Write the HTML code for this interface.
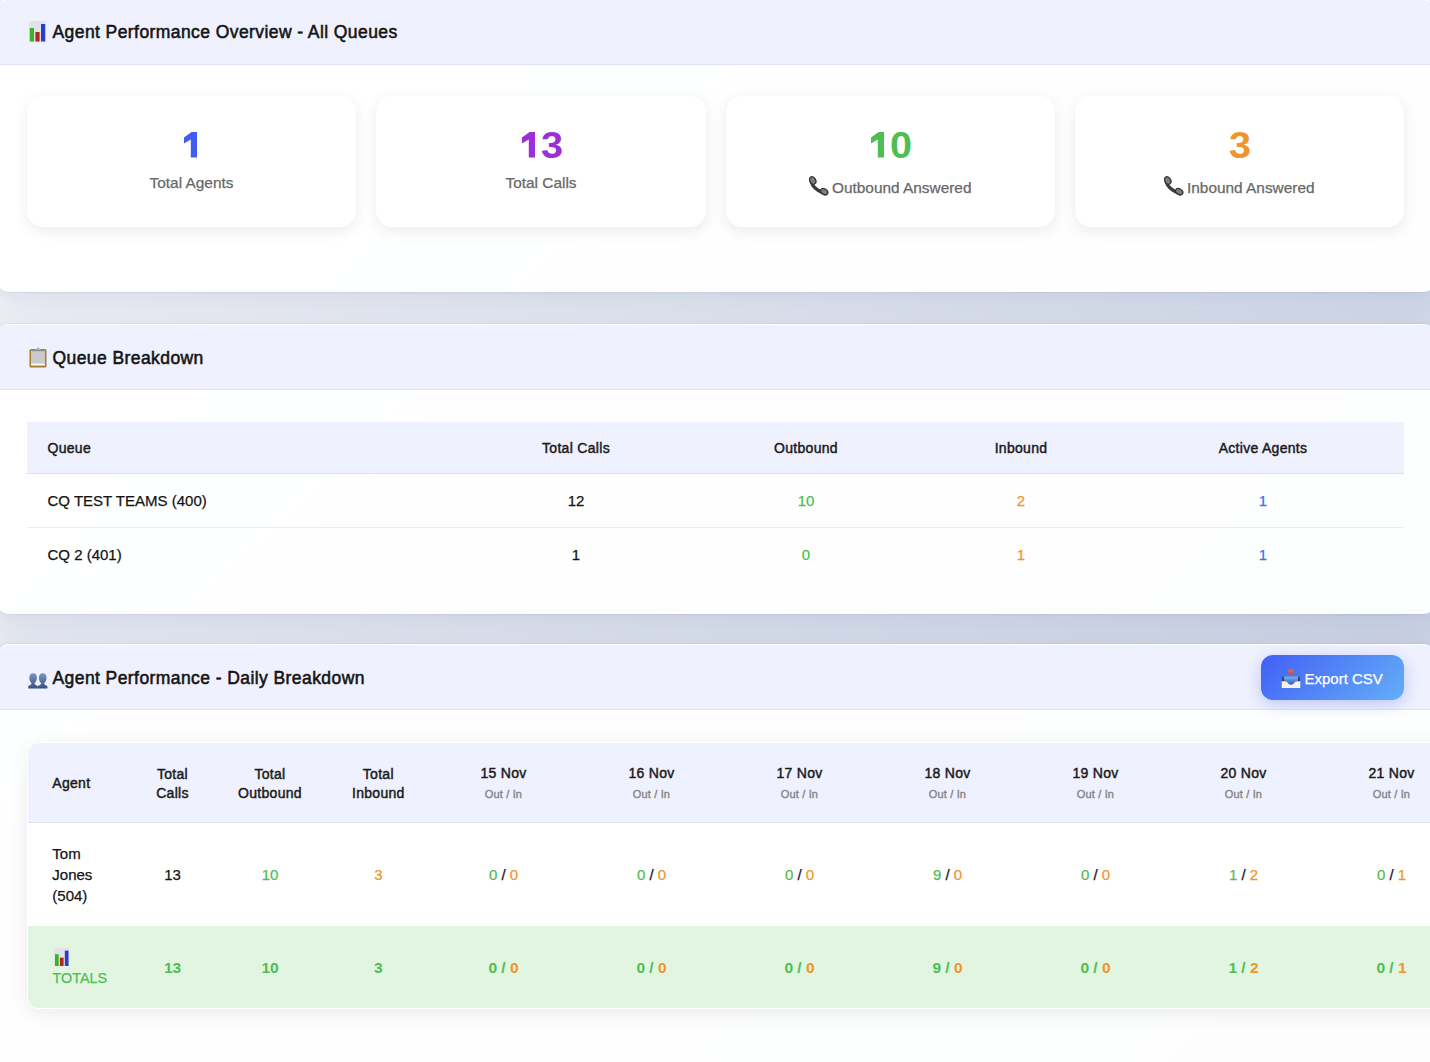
<!DOCTYPE html>
<html><head><meta charset="utf-8">
<style>
*{box-sizing:border-box;margin:0;padding:0}
html,body{width:1430px;height:1062px;overflow:hidden}
body{font-family:"Liberation Sans",sans-serif;color:#141414;position:relative;
background:linear-gradient(135deg,#f5f6f8 0%,#c3cde0 100%);}
.panel{position:absolute;left:-2.5px;width:1436.5px;border-radius:10px;background:rgba(255,255,255,0.96);
box-shadow:0 8px 32px rgba(31,38,135,0.10),0 0 2px rgba(0,0,0,0.15);border-top:1px solid rgba(255,255,255,0.9);overflow:hidden}
.ph{position:absolute;left:0;top:0;width:100%;height:65px;background:#eff1fe;border-bottom:1px solid #e1e4f0}
.ttl{position:absolute;font-size:17.5px;letter-spacing:0.42px;font-weight:400;-webkit-text-stroke:0.55px #141414;line-height:20px;color:#141414;white-space:nowrap}
.emo{position:absolute}
.card{position:absolute;top:96px;height:131px;background:#fff;border-radius:16px;box-shadow:0 4px 15px rgba(0,0,0,0.08)}
.t{position:absolute;text-align:center;white-space:nowrap;line-height:20px;font-size:15px;-webkit-text-stroke-width:0.25px}
.num{font-size:36px;font-weight:700;line-height:40px;-webkit-text-stroke-width:0}
.lbl{font-size:15.4px;color:#686868}
.hd{font-size:14px;font-weight:400;color:#1a1a1a;-webkit-text-stroke-width:0.45px;letter-spacing:0.3px}
.sub{font-size:11px;font-weight:400;color:#858585;-webkit-text-stroke-width:0.35px;letter-spacing:0.15px}
.g{color:#4cbf52}.o{color:#f0952a}.b{color:#4a6ee8}
.bold{font-weight:700;-webkit-text-stroke-width:0}
</style></head><body>

<div class="panel" style="top:-1px;height:293px"><div class="ph"></div></div>
<div class="panel" style="top:324px;height:290px"><div class="ph"></div></div>
<div class="panel" style="top:644px;height:460px"><div class="ph"></div></div>
<div class="emo" style="left:29px;top:21px"><svg class="emo" width="17" height="21" viewBox="0 0 17 21"><rect x="0" y="0" width="17" height="21" fill="#dfe3ea"/><rect x="0.8" y="7" width="4.2" height="13.5" fill="#39b424"/><rect x="6.4" y="11" width="4.2" height="9.5" fill="#b3271b"/><rect x="12" y="3" width="4.2" height="17.5" fill="#2b3ec6"/></svg></div><div class="ttl" style="left:52.5px;top:21.7px">Agent Performance Overview - All Queues</div>
<div class="emo" style="left:28.8px;top:347px"><svg width="18" height="21" viewBox="0 0 18 21"><rect x="0.5" y="2" width="17" height="18.5" rx="1.6" fill="#a27c2e"/><rect x="2" y="3.5" width="14" height="14.8" fill="#cacaca"/><rect x="2" y="16.5" width="14" height="2" fill="#f6f6f4"/><path d="M5.5 3.2 L9 0 L12.5 3.2 Z" fill="#b4c0cf"/><rect x="3" y="2.6" width="12" height="1.6" fill="#8f8f8f"/></svg></div><div class="ttl" style="left:52.5px;top:347.5px">Queue Breakdown</div>
<div class="emo" style="left:27.9px;top:672.5px"><svg width="20" height="16" viewBox="0 0 20 16"><defs><linearGradient id="pg" x1="0" y1="0" x2="0" y2="1"><stop offset="0" stop-color="#7a97c2"/><stop offset="1" stop-color="#34507f"/></linearGradient></defs><path d="M5.2 0.3C7.8 0.3 8.9 2.3 8.9 5C8.9 7.6 7.6 9.3 6.4 10.5C6.9 11.6 8.2 12.3 9.8 13V15.5H0.3V13C1.8 12.3 3.1 11.6 3.7 10.5C2.6 9.3 1.3 7.6 1.3 5C1.3 2.3 2.6 0.3 5.2 0.3Z" fill="url(#pg)"/><path d="M14.8 0.3C17.4 0.3 18.5 2.3 18.5 5C18.5 7.6 17.2 9.3 16.0 10.5C16.5 11.6 17.8 12.3 19.4 13V15.5H9.9V13C11.4 12.3 12.7 11.6 13.3 10.5C12.2 9.3 10.9 7.6 10.9 5C10.9 2.3 12.2 0.3 14.8 0.3Z" fill="url(#pg)"/></svg></div><div class="ttl" style="left:52.5px;top:668px">Agent Performance - Daily Breakdown</div>
<div class="card" style="left:27px;width:329px"></div>
<svg style="position:absolute;left:184px;top:132.3px" width="14" height="26" viewBox="0 0 14 26"><path d="M13.0 0 V25.55 H6.8 V7.6 L0 11.6 V5.6 L7.6 0 Z" fill="#405cf5"/></svg>
<div class="t lbl" style="left:91.5px;width:200px;top:172.5px;">Total Agents</div>
<div class="card" style="left:376px;width:330px"></div>
<svg style="position:absolute;left:521.9px;top:132.3px" width="14" height="26" viewBox="0 0 14 26"><path d="M13.0 0 V25.55 H6.8 V7.6 L0 11.6 V5.6 L7.6 0 Z" fill="#9b30d8"/></svg>
<div class="t num" style="left:540.6px;top:126.4px;text-align:left;color:#9b30d8;transform:scaleX(1.1);transform-origin:0 0">3</div>
<div class="t lbl" style="left:441.0px;width:200px;top:172.5px;">Total Calls</div>
<div class="card" style="left:726px;width:329px"></div>
<svg style="position:absolute;left:870.8px;top:132.3px" width="14" height="26" viewBox="0 0 14 26"><path d="M13.0 0 V25.55 H6.8 V7.6 L0 11.6 V5.6 L7.6 0 Z" fill="#4cbf52"/></svg>
<div class="t num" style="left:890.3px;top:126.4px;text-align:left;color:#4cbf52;transform:scaleX(1.1);transform-origin:0 0">0</div>
<div class="t lbl" style="left:726px;width:329px;top:175.7px"><span style="display:inline-block;width:20px;height:19px;vertical-align:-3px;margin-right:2.5px;position:relative;top:0px;left:-1px"><svg width="20" height="20" viewBox="0 0 20 20"><path d="M2.6 6.5 Q4.2 12.5 13.5 16.6" fill="none" stroke="#3a3c41" stroke-width="3.4" stroke-linecap="round"/><ellipse cx="3.7" cy="4.5" rx="2.9" ry="4.0" transform="rotate(-28 3.7 4.5)" fill="#7c7d80" stroke="#2f3135" stroke-width="1.3"/><ellipse cx="15.2" cy="15.7" rx="3.9" ry="2.8" transform="rotate(30 15.2 15.7)" fill="#7c7d80" stroke="#2f3135" stroke-width="1.3"/></svg></span>Outbound Answered</div>
<div class="card" style="left:1075px;width:329px"></div>
<div class="t num" style="left:1229.2px;top:126.4px;text-align:left;color:#f0952a;transform:scaleX(1.1);transform-origin:0 0">3</div>
<div class="t lbl" style="left:1075px;width:329px;top:175.7px"><span style="display:inline-block;width:20px;height:19px;vertical-align:-3px;margin-right:2.5px;position:relative;top:0px;left:-1px"><svg width="20" height="20" viewBox="0 0 20 20"><path d="M2.6 6.5 Q4.2 12.5 13.5 16.6" fill="none" stroke="#3a3c41" stroke-width="3.4" stroke-linecap="round"/><ellipse cx="3.7" cy="4.5" rx="2.9" ry="4.0" transform="rotate(-28 3.7 4.5)" fill="#7c7d80" stroke="#2f3135" stroke-width="1.3"/><ellipse cx="15.2" cy="15.7" rx="3.9" ry="2.8" transform="rotate(30 15.2 15.7)" fill="#7c7d80" stroke="#2f3135" stroke-width="1.3"/></svg></span>Inbound Answered</div>
<div style="position:absolute;left:27px;top:422px;width:1377px;height:51px;background:#eff1fe"></div>
<div style="position:absolute;left:27px;top:473px;width:1377px;height:1px;background:#dfe2ee"></div>
<div style="position:absolute;left:27px;top:527px;width:1377px;height:1px;background:#ececf0"></div>
<div class="t hd" style="left:47.5px;top:438.3px;text-align:left">Queue</div>
<div class="t hd" style="left:506.0px;width:140px;top:438.3px;">Total Calls</div>
<div class="t hd" style="left:736.0px;width:140px;top:438.3px;">Outbound</div>
<div class="t hd" style="left:951.0px;width:140px;top:438.3px;">Inbound</div>
<div class="t hd" style="left:1193.0px;width:140px;top:438.3px;">Active Agents</div>
<div class="t" style="left:47.5px;top:490.8px;text-align:left">CQ TEST TEAMS (400)</div>
<div class="t " style="left:506.0px;width:140px;top:490.8px;">12</div>
<div class="t g" style="left:736.0px;width:140px;top:490.8px;">10</div>
<div class="t o" style="left:951.0px;width:140px;top:490.8px;">2</div>
<div class="t b" style="left:1193.0px;width:140px;top:490.8px;">1</div>
<div class="t" style="left:47.5px;top:544.8px;text-align:left">CQ 2 (401)</div>
<div class="t " style="left:506.0px;width:140px;top:544.8px;">1</div>
<div class="t g" style="left:736.0px;width:140px;top:544.8px;">0</div>
<div class="t o" style="left:951.0px;width:140px;top:544.8px;">1</div>
<div class="t b" style="left:1193.0px;width:140px;top:544.8px;">1</div>
<div style="position:absolute;left:1261px;top:655px;width:143px;height:45px;border-radius:12px;background:linear-gradient(135deg,#4160f6 0%,#64aef7 100%);box-shadow:0 4px 15px rgba(67,97,238,0.3)"></div>
<div class="emo" style="left:1280.5px;top:668.8px"><svg width="20" height="20" viewBox="0 0 20 20"><defs><linearGradient id="ib" x1="0" y1="0" x2="0" y2="1"><stop offset="0" stop-color="#7db0f4"/><stop offset="1" stop-color="#3560c0"/></linearGradient><linearGradient id="ar" x1="0" y1="0" x2="0" y2="1"><stop offset="0" stop-color="#f06a4a"/><stop offset="1" stop-color="#d93a22"/></linearGradient></defs><path d="M7.2 1.6 L9.2 0.3 H10.8 L12.8 1.6 L13 2.8 L10 6.5 L7 2.8Z" fill="url(#ar)"/><path d="M1.6 7.3 H18.4 L18.8 12.5 H1.2 Z" fill="#16244f"/><path d="M2.6 7.3 H17.4 L17.2 12 Q15 15.7 10 15.7 Q5 15.7 2.8 12Z" fill="url(#ib)"/><path d="M0.7 12.3 Q3.8 11.9 5.8 12.8 Q7.6 15.9 10 15.9 Q12.4 15.9 14.2 12.8 Q16.2 11.9 19.3 12.3 V18.5 Q19.3 18.9 18.9 18.9 H1.1 Q0.7 18.9 0.7 18.5Z" fill="#f5f2e9"/></svg></div>
<div class="t" style="left:1304.5px;top:668.8px;color:#fff;text-align:left">Export CSV</div>
<div style="position:absolute;left:27px;top:742px;width:1450px;height:267px;border-radius:12px;background:#fff;border:1px solid #fff;box-shadow:0 4px 20px rgba(0,0,0,0.08);overflow:hidden"><div style="position:absolute;left:0;top:0;width:100%;height:80px;background:#eff1fe;border-bottom:1px solid #dfe2ee"></div><div style="position:absolute;left:0;top:183px;width:100%;height:82px;background:#e2f5e1"></div></div>
<div class="t hd" style="left:52.3px;top:773.0px;text-align:left">Agent</div>
<div class="t hd" style="left:102.5px;width:140px;top:763.6px;">Total</div>
<div class="t hd" style="left:102.5px;width:140px;top:783.2px;">Calls</div>
<div class="t hd" style="left:200.0px;width:140px;top:763.6px;">Total</div>
<div class="t hd" style="left:200.0px;width:140px;top:783.2px;">Outbound</div>
<div class="t hd" style="left:308.3px;width:140px;top:763.6px;">Total</div>
<div class="t hd" style="left:308.3px;width:140px;top:783.2px;">Inbound</div>
<div class="t hd" style="left:433.5px;width:140px;top:763.1px;">15 Nov</div>
<div class="t sub" style="left:453.5px;width:100px;top:786.3px;line-height:16px">Out / In</div>
<div class="t hd" style="left:581.5px;width:140px;top:763.1px;">16 Nov</div>
<div class="t sub" style="left:601.5px;width:100px;top:786.3px;line-height:16px">Out / In</div>
<div class="t hd" style="left:729.5px;width:140px;top:763.1px;">17 Nov</div>
<div class="t sub" style="left:749.5px;width:100px;top:786.3px;line-height:16px">Out / In</div>
<div class="t hd" style="left:877.5px;width:140px;top:763.1px;">18 Nov</div>
<div class="t sub" style="left:897.5px;width:100px;top:786.3px;line-height:16px">Out / In</div>
<div class="t hd" style="left:1025.5px;width:140px;top:763.1px;">19 Nov</div>
<div class="t sub" style="left:1045.5px;width:100px;top:786.3px;line-height:16px">Out / In</div>
<div class="t hd" style="left:1173.5px;width:140px;top:763.1px;">20 Nov</div>
<div class="t sub" style="left:1193.5px;width:100px;top:786.3px;line-height:16px">Out / In</div>
<div class="t hd" style="left:1321.5px;width:140px;top:763.1px;">21 Nov</div>
<div class="t sub" style="left:1341.5px;width:100px;top:786.3px;line-height:16px">Out / In</div>
<div class="t" style="left:52.3px;top:843.5px;text-align:left">Tom</div>
<div class="t" style="left:52.3px;top:864.8px;text-align:left">Jones</div>
<div class="t" style="left:52.3px;top:885.5px;text-align:left">(504)</div>
<div class="t " style="left:102.5px;width:140px;top:864.6px;">13</div>
<div class="t g" style="left:200.0px;width:140px;top:864.6px;">10</div>
<div class="t o" style="left:308.3px;width:140px;top:864.6px;">3</div>
<div class="t " style="left:433.5px;width:140px;top:864.6px;"><span class="g">0</span> / <span class="o">0</span></div>
<div class="t " style="left:581.5px;width:140px;top:864.6px;"><span class="g">0</span> / <span class="o">0</span></div>
<div class="t " style="left:729.5px;width:140px;top:864.6px;"><span class="g">0</span> / <span class="o">0</span></div>
<div class="t " style="left:877.5px;width:140px;top:864.6px;"><span class="g">9</span> / <span class="o">0</span></div>
<div class="t " style="left:1025.5px;width:140px;top:864.6px;"><span class="g">0</span> / <span class="o">0</span></div>
<div class="t " style="left:1173.5px;width:140px;top:864.6px;"><span class="g">1</span> / <span class="o">2</span></div>
<div class="t " style="left:1321.5px;width:140px;top:864.6px;"><span class="g">0</span> / <span class="o">1</span></div>
<div class="emo" style="left:53.8px;top:947.5px"><svg width="15.5" height="18.5" viewBox="0 0 17 21"><rect x="0" y="0" width="17" height="21" fill="#dfe3ea"/><rect x="0.8" y="7" width="4.2" height="13.5" fill="#39b424"/><rect x="6.4" y="11" width="4.2" height="9.5" fill="#b3271b"/><rect x="12" y="3" width="4.2" height="17.5" fill="#2b3ec6"/></svg></div>
<div class="t g" style="left:52.5px;top:967.8px;text-align:left;font-size:14.4px">TOTALS</div>
<div class="t g bold" style="left:102.5px;width:140px;top:957.6px;font-size:15.5px">13</div>
<div class="t g bold" style="left:200.0px;width:140px;top:957.6px;font-size:15.5px">10</div>
<div class="t g bold" style="left:308.3px;width:140px;top:957.6px;font-size:15.5px">3</div>
<div class="t bold" style="left:433.5px;width:140px;top:957.6px;font-size:15.5px"><span class="g">0 /</span> <span class="o">0</span></div>
<div class="t bold" style="left:581.5px;width:140px;top:957.6px;font-size:15.5px"><span class="g">0 /</span> <span class="o">0</span></div>
<div class="t bold" style="left:729.5px;width:140px;top:957.6px;font-size:15.5px"><span class="g">0 /</span> <span class="o">0</span></div>
<div class="t bold" style="left:877.5px;width:140px;top:957.6px;font-size:15.5px"><span class="g">9 /</span> <span class="o">0</span></div>
<div class="t bold" style="left:1025.5px;width:140px;top:957.6px;font-size:15.5px"><span class="g">0 /</span> <span class="o">0</span></div>
<div class="t bold" style="left:1173.5px;width:140px;top:957.6px;font-size:15.5px"><span class="g">1 /</span> <span class="o">2</span></div>
<div class="t bold" style="left:1321.5px;width:140px;top:957.6px;font-size:15.5px"><span class="g">0 /</span> <span class="o">1</span></div>
</body></html>
